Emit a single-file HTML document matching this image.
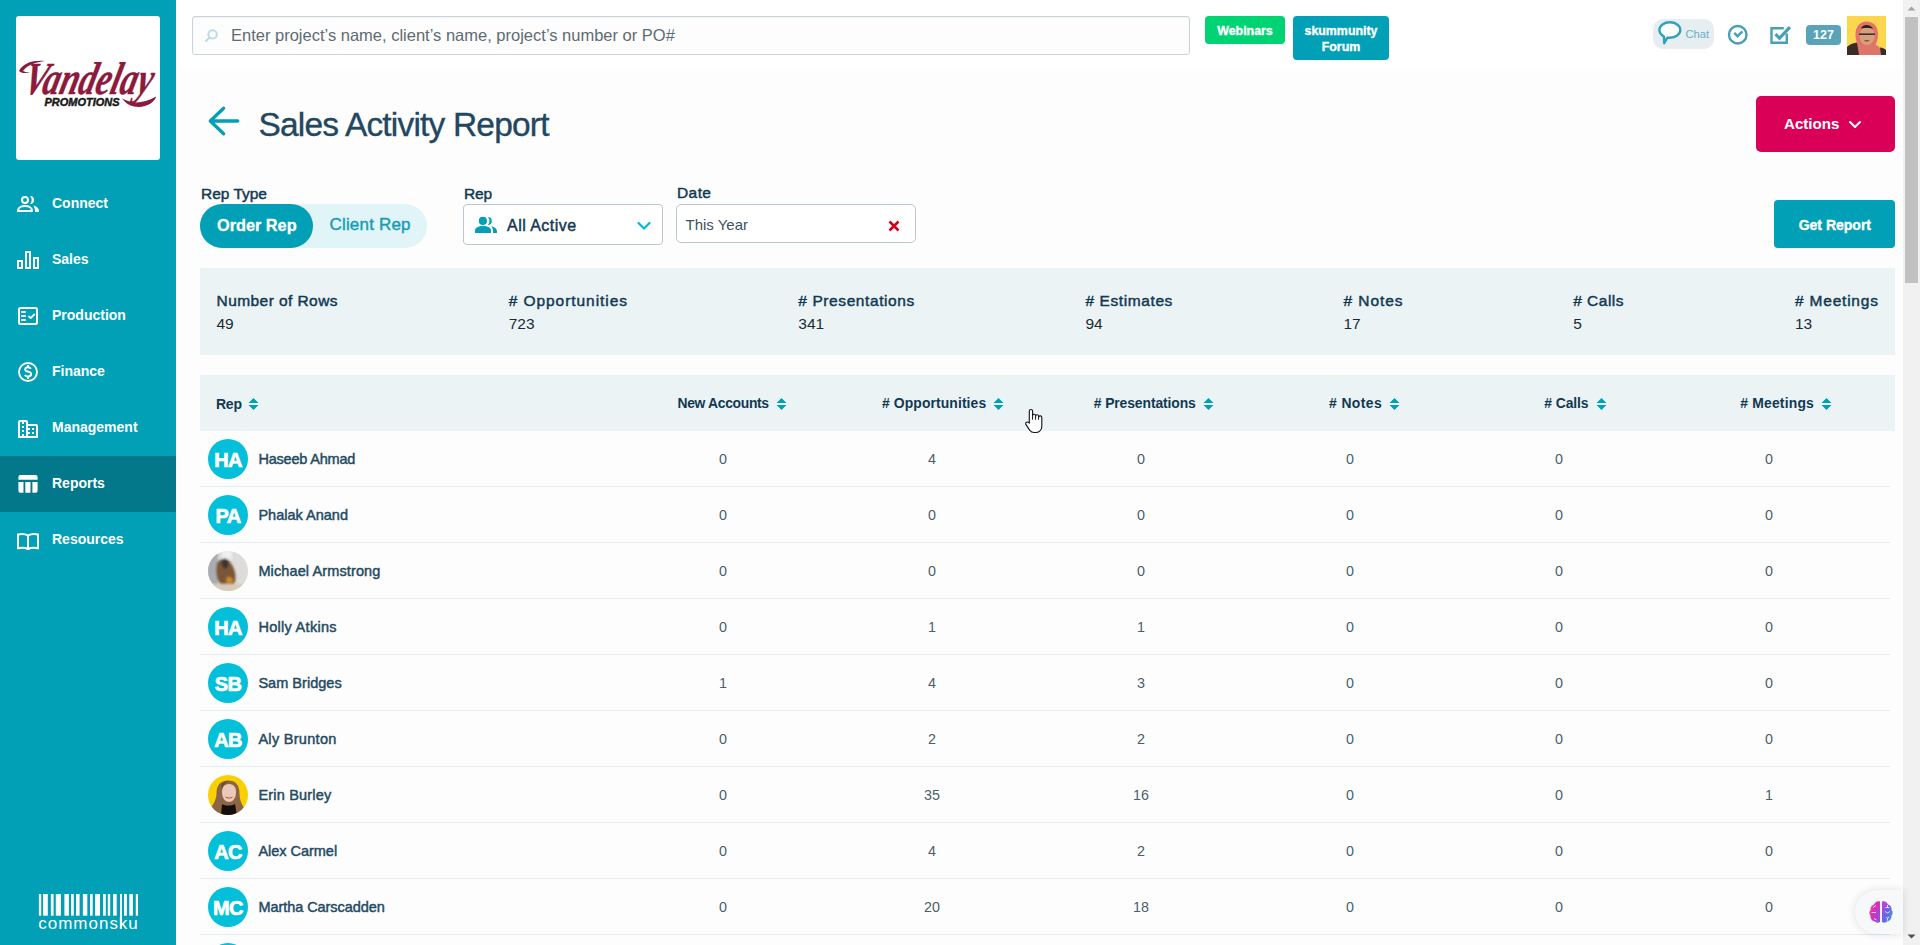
<!DOCTYPE html>
<html><head><meta charset="utf-8">
<style>
*{box-sizing:border-box;margin:0;padding:0}
html,body{width:1920px;height:945px;overflow:hidden;font-family:"Liberation Sans",sans-serif;background:#fdfdfd;color:#123952}
.abs{position:absolute}
.t{position:absolute;line-height:1;white-space:nowrap}
#side{position:absolute;left:0;top:0;width:176px;height:945px;background:#01a0b6}
#logo{position:absolute;left:16px;top:16px;width:144px;height:144px;background:#fff;border-radius:3px;overflow:hidden}
.nav{position:absolute;left:0;width:176px;height:56px;color:#fff;font-weight:bold;font-size:14px}
.nav span{position:absolute;left:52px;top:18px;line-height:18px}
#top{position:absolute;left:176px;top:0;width:1727px;height:69px;background:#fff}
#scroll{position:absolute;left:1903px;top:0;width:17px;height:945px;background:#f1f1f1}
</style></head><body>
<div id="side">
<div id="logo"><svg class="abs" style="left:0;top:0" width="144" height="144" viewBox="16 16 144 144">
<g transform="translate(22 93.5) skewX(-14)">
<text x="0" y="0" font-family="Liberation Serif" font-style="italic" font-weight="bold" font-size="46" fill="#8c1a3c" stroke="#8c1a3c" stroke-width="0.4" stroke-linejoin="round" textLength="128" lengthAdjust="spacingAndGlyphs">Vandelay</text>
</g>
<path d="M19 71 c4-8 14-11 26-10 c-9 1-18 4-22 10 c1 1 4 1 7 1 c-5 2-9 1-11-1z" fill="#8c1a3c"/>
<path d="M122 98.5 c9 5 20 6 34-2 c-1 6-11 12-22 10 c-5-1-9-4-12-8z" fill="#8c1a3c"/>
<text x="44.5" y="106" font-family="Liberation Sans" font-style="italic" font-weight="bold" font-size="11.5" fill="#1a1a1a" stroke="#1a1a1a" stroke-width="0.5" textLength="75" lengthAdjust="spacingAndGlyphs">PROMOTIONS</text>
</svg></div>
<div class="nav" style="top:176px"><svg class="abs" style="left:16px;top:18px" width="24" height="24" viewBox="16 194 24 24" fill="none" stroke="#fff" stroke-width="2"><circle cx="25" cy="200" r="3"/><path d="M18 211v-.3c0-2.9 3.1-4.6 7-4.6s7 1.7 7 4.6v.3z"/><path stroke="none" fill="#fff" d="M30 196a4 4 0 0 1 0 8a5.5 5.5 0 0 0 0-8z M33.3 205.4c3.3.9 5.7 2.8 5.7 5V212h-4v-.8c0-2.2-.6-4-1.7-5.8z"/></svg><span>Connect</span></div>
<div class="nav" style="top:232px"><svg class="abs" style="left:16px;top:16px" width="24" height="24" viewBox="16 248 24 24" fill="none" stroke="#fff" stroke-width="2"><rect x="18" y="261" width="4" height="7"/><rect x="26" y="252" width="4" height="16"/><rect x="34" y="258" width="4" height="10"/></svg><span>Sales</span></div>
<div class="nav" style="top:288px"><svg class="abs" style="left:16px;top:16px" width="24" height="24" viewBox="16 304 24 24" fill="none" stroke="#fff" stroke-width="2"><rect x="19" y="308" width="18" height="16" rx="1.5"/><path stroke-linecap="round" d="M22 312h3M22 316h3M22 320h3"/><path stroke-width="1.8" stroke-linecap="round" stroke-linejoin="round" d="M29 316.5l1.7 1.6 3.5-3.6"/></svg><span>Production</span></div>
<div class="nav" style="top:344px"><svg class="abs" style="left:16px;top:16px" width="24" height="24" viewBox="16 360 24 24" fill="none" stroke="#fff" stroke-width="2"><circle cx="28" cy="372" r="9" stroke-width="1.9"/><path stroke-width="1.9" d="M30.8 368.9c-.5-1-1.5-1.7-2.8-1.7-1.6 0-2.8.9-2.8 2.2 0 3 6 1.6 6 4.7 0 1.4-1.3 2.4-3.2 2.4-1.4 0-2.6-.7-3.1-1.7M28 365.1v2M28 376.9v2"/></svg><span>Finance</span></div>
<div class="nav" style="top:400px"><svg class="abs" style="left:16px;top:18px" width="24" height="24" viewBox="16 418 24 24" fill="none" stroke="#fff" stroke-width="2"><path fill="#fff" stroke="none" d="M18 422a2 2 0 0 1 2-2h6a2 2 0 0 1 2 2v2h8a2 2 0 0 1 2 2v12H18z"/><g fill="#01a0b6" stroke="none"><rect x="20" y="422" width="2" height="14"/><rect x="24" y="422" width="2" height="14"/><rect x="22" y="424" width="2" height="2"/><rect x="22" y="428" width="2" height="2"/><rect x="22" y="432" width="2" height="2"/><rect x="28" y="426" width="8" height="10"/></g><g fill="#fff" stroke="none"><rect x="28" y="428" width="2" height="2"/><rect x="28" y="432" width="2" height="2"/><rect x="32" y="428" width="2" height="2"/><rect x="32" y="432" width="2" height="2"/></g></svg><span>Management</span></div>
<div class="nav" style="top:456px;background:#02788a"><svg class="abs" style="left:16px;top:16px" width="24" height="24" viewBox="16 472 24 24" fill="none" stroke="#fff" stroke-width="2"><path fill="#fff" stroke="none" d="M18.4 477a2 2 0 0 1 2-2h15.2a2 2 0 0 1 2 2v2.8H18.4z M18.4 482h5.1v10.8h-3.1a2 2 0 0 1-2-2z M25.3 482h5.2v10.8h-5.2z M32.4 482h5.2v8.8a2 2 0 0 1-2 2h-3.2z"/></svg><span>Reports</span></div>
<div class="nav" style="top:512px"><svg class="abs" style="left:16px;top:18px" width="24" height="24" viewBox="16 530 24 24" fill="none" stroke="#fff" stroke-width="2"><path stroke-linejoin="round" d="M18 534.5c3-.9 6.5-.9 10 .8V549c-3.5-1.6-7-1.6-10-.6z M38 534.5c-3-.9-6.5-.9-10 .8V549c3.5-1.6 7-1.6 10-.6z"/></svg><span>Resources</span></div>
<svg class="abs" style="left:30px;top:885px" width="120" height="50" viewBox="30 885 120 50" fill="#fff"><rect x="38.9" y="894" width="2.30" height="21.7"/><rect x="43.1" y="894" width="4.70" height="21.7"/><rect x="50.9" y="894" width="2.70" height="21.7"/><rect x="55.8" y="894" width="5.10" height="21.7"/><rect x="64.4" y="894" width="4.50" height="21.7"/><rect x="71.1" y="894" width="2.70" height="21.7"/><rect x="76" y="894" width="3.60" height="21.7"/><rect x="82.9" y="894" width="4.40" height="21.7"/><rect x="90" y="894" width="2.70" height="21.7"/><rect x="95.1" y="894" width="4.90" height="21.7"/><rect x="103.1" y="894" width="2.70" height="21.7"/><rect x="107.8" y="894" width="2.40" height="21.7"/><rect x="113.1" y="894" width="3.60" height="21.7"/><rect x="120" y="894" width="2.00" height="34.7"/><rect x="124" y="894" width="2.90" height="21.7"/><rect x="129.3" y="894" width="3.60" height="21.7"/><rect x="135.8" y="894" width="2.20" height="21.7"/>
<text x="38.3" y="928.7" font-family="Liberation Sans" font-size="17" fill="#fff" textLength="99.5" lengthAdjust="spacing">commonsku</text></svg></div>
<div id="top"></div>
<div class="abs" style="left:192px;top:16px;width:998px;height:39px;border:1px solid #c9d3da;border-radius:3px;background:#fdfdfd;box-shadow:inset 0 1px 2px rgba(0,0,0,.05)"></div>
<svg class="abs" style="left:204px;top:28px" width="15" height="15" viewBox="0 0 15 15" fill="none" stroke="#b9dce5" stroke-width="2"><circle cx="8.6" cy="6.4" r="4.2"/><path d="M5.6 9.4L2 13" stroke-linecap="round"/></svg>
<div class="t" style="left:231px;top:27.13px;font-size:16.5px;font-weight:normal;color:#5f6b73;">Enter project&#8217;s name, client&#8217;s name, project&#8217;s number or PO#</div>
<div class="abs" style="left:1205px;top:16px;width:80px;height:28px;background:#00d374;border-radius:4px"></div>
<div class="t" style="left:1145.0px;width:200px;text-align:center;top:25.10px;font-size:12.4px;font-weight:bold;color:#fff;-webkit-text-stroke:0.35px #fff;">Webinars</div>
<div class="abs" style="left:1293px;top:16px;width:96px;height:44px;background:#01a0b6;border-radius:4px"></div>
<div class="t" style="left:1241.0px;width:200px;text-align:center;top:25.10px;font-size:12.4px;font-weight:bold;color:#fff;-webkit-text-stroke:0.35px #fff;">skummunity</div>
<div class="t" style="left:1241.0px;width:200px;text-align:center;top:40.70px;font-size:12.4px;font-weight:bold;color:#fff;-webkit-text-stroke:0.35px #fff;">Forum</div>
<div class="abs" style="left:1653px;top:19px;width:61px;height:30px;background:#e6eef1;border-radius:10px"></div>
<svg class="abs" style="left:1656px;top:19px" width="28" height="28" viewBox="0 0 28 28" fill="#fff" stroke="#2ea2ba" stroke-width="2.4" stroke-linejoin="round"><path d="M8 17.6C4.8 15.8 3.4 13.6 3.4 11c0-4.4 4.7-7.8 10.45-7.8s10.45 3.4 10.45 7.8-4.7 7.8-10.45 7.8c-.9 0-1.7-.1-2.5-.2L8.2 24.2z"/></svg>
<div class="t" style="left:1685.5px;top:28.72px;font-size:11.2px;font-weight:normal;color:#6cafc2;">Chat</div>
<svg class="abs" style="left:1726px;top:23px" width="24" height="24" viewBox="0 0 24 24" fill="none" stroke="#4a9fb8" stroke-width="2.4"><circle cx="11.75" cy="11.75" r="8.75"/><path d="M8.3 9.9l3.2 3.4 4.9-5" stroke-linecap="butt" stroke-linejoin="miter" stroke-width="2.5"/></svg>
<svg class="abs" style="left:1769px;top:24px" width="24" height="22" viewBox="0 0 24 22" fill="none" stroke="#4a9fb8" stroke-width="2.4"><path d="M17.8 9.5V18.7H2.5V4.2H14.8"/><path d="M6.5 10.2l4 4 10.5-11" stroke-width="3.2"/></svg>
<div class="abs" style="left:1806px;top:25px;width:35px;height:20px;background:#5aa3b8;border-radius:4px"></div>
<div class="t" style="left:1723.5px;width:200px;text-align:center;top:29.42px;font-size:12.5px;font-weight:bold;color:#fff;">127</div>
<svg class="abs" style="left:1847px;top:16px" width="39" height="39" viewBox="0 0 39 39">
<rect width="39" height="39" fill="#fdd64f"/>
<path d="M19.5 5.5c-7 0-11 5.5-11 13 0 4 .8 7 2.2 9.5C6 30 3.5 33.5 2.5 39H37c-1.5-5-4.5-8.5-8.5-10.5 1.7-3 2.5-6.5 2.5-10.5 0-7.5-4.5-12.5-11.5-12.5z" fill="#e07468"/>
<path d="M0 31c3-3 7-4 10-4.5L12 39H0z" fill="#3a2a2a"/>
<path d="M39 34c-1.5-1.5-4-2.5-6-2.5L34 39h5z" fill="#3a2a2a"/>
<path d="M12.5 19.5c0-5 3-8.5 7.5-8.5s7.5 3.5 7.5 8.5c0 5.5-3.2 9.5-7.5 9.5s-7.5-4-7.5-9.5z" fill="#d6a07a"/>
<path d="M12 18.2h16" stroke="#3d3030" stroke-width="1.6"/>
<path d="M15.5 11.5c1.5-2 6-2.5 8.5 0-2.5-.5-6-.5-8.5 0z" fill="#2a1e1e" stroke="#2a1e1e" stroke-width="1.5"/>
<path d="M17 24.5c1.6 1 4 1 5.5 0" stroke="#b06a60" stroke-width="1"/>
</svg><div id="scroll"><div class="abs" style="left:2px;top:17px;width:13px;height:266px;background:#c1c1c1"></div><svg class="abs" style="left:0;top:0" width="17" height="17"><path d="M4.5 10.5L8.5 6.5 12.5 10.5z" fill="#a3a3a3"/></svg><svg class="abs" style="left:0;top:928px" width="17" height="17"><path d="M4.5 6.5L8.5 10.5 12.5 6.5z" fill="#505050"/></svg></div>
<svg class="abs" style="left:200px;top:100px" width="48" height="42" viewBox="200 100 48 42" fill="none" stroke="#01a0b6" stroke-width="3.3" stroke-linecap="round" stroke-linejoin="round"><path d="M223.6 108.2L210.3 121l13.3 12.8M210.5 121h27.3"/></svg>
<div class="t" style="left:258.5px;top:108.04px;font-size:33.5px;font-weight:normal;color:#22475f;-webkit-text-stroke:0.35px #22475f;letter-spacing:-0.812px;">Sales Activity Report</div>
<div class="abs" style="left:1756px;top:96px;width:139px;height:56px;background:#db0057;border-radius:5px"></div>
<div class="t" style="left:1784px;top:116.31px;font-size:15.1px;font-weight:bold;color:#fff;">Actions</div>
<svg class="abs" style="left:1848px;top:119px" width="14" height="11" viewBox="0 0 14 11" fill="none" stroke="#fff" stroke-width="2" stroke-linecap="round" stroke-linejoin="round"><path d="M2 3l5 5 5-5"/></svg>
<div class="t" style="left:201.0px;top:185.88px;font-size:15.5px;font-weight:normal;color:#123952;letter-spacing:-0.018px;-webkit-text-stroke:0.45px #123952;">Rep Type</div>
<div class="abs" style="left:200px;top:204px;width:227px;height:44px;background:#e1f5f8;border-radius:22px"></div>
<div class="abs" style="left:200px;top:204px;width:113px;height:44px;background:#01a0b6;border-radius:22px"></div>
<div class="t" style="left:217px;top:217.00px;font-size:16.3px;font-weight:bold;color:#fff;-webkit-text-stroke:0.3px #fff;">Order Rep</div>
<div class="t" style="left:329.5px;top:216.41px;font-size:17px;font-weight:normal;color:#1a9db3;letter-spacing:0.181px;-webkit-text-stroke:0.45px #1a9db3;">Client Rep</div>
<div class="t" style="left:464.0px;top:185.88px;font-size:15.5px;font-weight:normal;color:#123952;letter-spacing:-0.188px;-webkit-text-stroke:0.45px #123952;">Rep</div>
<div class="abs" style="left:463px;top:204px;width:200px;height:41px;border:1px solid #bcc8d0;border-radius:4px;background:#fff"></div>
<svg class="abs" style="left:474px;top:216px" width="24" height="18" viewBox="0 0 24 18" fill="#01a0b6"><circle cx="8.9" cy="4.9" r="4.05"/><path d="M13.8 1a4 4 0 0 1 0 8a5.5 5.5 0 0 0 0-8z"/><path d="M1 17.1v-2.6c0-2.8 3.5-4.5 8-4.5s8 1.7 8 4.5v2.6z"/><path d="M17.4 10.3c3 .7 5.6 2.6 5.6 5v1.8h-4v-1.8c0-2-.6-3.7-1.6-5z"/></svg>
<div class="t" style="left:507.0px;top:217.75px;font-size:16px;font-weight:normal;color:#123952;letter-spacing:0.458px;-webkit-text-stroke:0.45px #123952;">All Active</div>
<svg class="abs" style="left:635px;top:218.5px" width="18" height="14" viewBox="0 0 18 14" fill="none" stroke="#00bcd6" stroke-width="2.2" stroke-linecap="round" stroke-linejoin="round"><path d="M3.5 4l5.5 5.5 5.5-5.5"/></svg>
<div class="t" style="left:677.0px;top:185.38px;font-size:15.5px;font-weight:normal;color:#123952;letter-spacing:0.417px;-webkit-text-stroke:0.45px #123952;">Date</div>
<div class="abs" style="left:676px;top:204px;width:240px;height:39px;border:1px solid #bcc8d0;border-radius:5px;background:#fff"></div>
<div class="t" style="left:685.5px;top:217.10px;font-size:15px;font-weight:normal;color:#3f5260;">This Year</div>
<svg class="abs" style="left:886px;top:218px" width="16" height="16" viewBox="0 0 16 16" fill="none" stroke="#d0021b" stroke-width="2.6"><path d="M3.5 3.5l9 9M12.5 3.5l-9 9"/></svg>
<div class="abs" style="left:1774px;top:200px;width:121px;height:48px;background:#01a0b6;border-radius:4px"></div>
<div class="t" style="left:1798.7px;top:217.65px;font-size:14px;font-weight:bold;color:#fff;-webkit-text-stroke:0.35px #fff;">Get Report</div>
<div class="abs" style="left:200px;top:268px;width:1695px;height:87px;background:#ebf3f5"></div>
<div class="t" style="left:216.5px;top:292.88px;font-size:15.5px;font-weight:normal;color:#123952;letter-spacing:0.433px;-webkit-text-stroke:0.45px #123952;">Number of Rows</div>
<div class="t" style="left:216.5px;top:316.48px;font-size:15.5px;font-weight:normal;color:#1b2b36;">49</div>
<div class="t" style="left:508.7px;top:292.88px;font-size:15.5px;font-weight:normal;color:#123952;letter-spacing:0.941px;-webkit-text-stroke:0.45px #123952;"># Opportunities</div>
<div class="t" style="left:508.7px;top:316.48px;font-size:15.5px;font-weight:normal;color:#1b2b36;">723</div>
<div class="t" style="left:798.3px;top:292.88px;font-size:15.5px;font-weight:normal;color:#123952;letter-spacing:0.589px;-webkit-text-stroke:0.45px #123952;"># Presentations</div>
<div class="t" style="left:798.3px;top:316.48px;font-size:15.5px;font-weight:normal;color:#1b2b36;">341</div>
<div class="t" style="left:1085.4px;top:292.88px;font-size:15.5px;font-weight:normal;color:#123952;letter-spacing:0.600px;-webkit-text-stroke:0.45px #123952;"># Estimates</div>
<div class="t" style="left:1085.4px;top:316.48px;font-size:15.5px;font-weight:normal;color:#1b2b36;">94</div>
<div class="t" style="left:1343.5px;top:292.88px;font-size:15.5px;font-weight:normal;color:#123952;letter-spacing:0.938px;-webkit-text-stroke:0.45px #123952;"># Notes</div>
<div class="t" style="left:1343.5px;top:316.48px;font-size:15.5px;font-weight:normal;color:#1b2b36;">17</div>
<div class="t" style="left:1573.2px;top:292.88px;font-size:15.5px;font-weight:normal;color:#123952;letter-spacing:0.487px;-webkit-text-stroke:0.45px #123952;"># Calls</div>
<div class="t" style="left:1573.2px;top:316.48px;font-size:15.5px;font-weight:normal;color:#1b2b36;">5</div>
<div class="t" style="left:1795.0px;top:292.88px;font-size:15.5px;font-weight:normal;color:#123952;letter-spacing:0.792px;-webkit-text-stroke:0.45px #123952;"># Meetings</div>
<div class="t" style="left:1795px;top:316.48px;font-size:15.5px;font-weight:normal;color:#1b2b36;">13</div>
<div class="abs" style="left:200px;top:375px;width:1695px;height:56px;background:#ebf3f5"></div>
<div class="t" style="left:216.0px;top:397.15px;font-size:14px;font-weight:bold;color:#123952;letter-spacing:-0.250px;">Rep</div>
<svg class="abs" style="left:248px;top:396.5px" width="11" height="14" viewBox="0 0 11 14" fill="#01a0b6"><path d="M5.5 1L10.5 6H.5z M5.5 13L.5 8h10z"/></svg>
<div class="t" style="left:677.5px;top:397.23px;font-size:13.9px;font-weight:bold;color:#123952;letter-spacing:-0.330px;">New Accounts</div>
<svg class="abs" style="left:775.5px;top:396.5px" width="11" height="14" viewBox="0 0 11 14" fill="#01a0b6"><path d="M5.5 1L10.5 6H.5z M5.5 13L.5 8h10z"/></svg>
<div class="t" style="left:882.0px;top:397.23px;font-size:13.9px;font-weight:bold;color:#123952;letter-spacing:0.107px;"># Opportunities</div>
<svg class="abs" style="left:992.5px;top:396.5px" width="11" height="14" viewBox="0 0 11 14" fill="#01a0b6"><path d="M5.5 1L10.5 6H.5z M5.5 13L.5 8h10z"/></svg>
<div class="t" style="left:1093.75px;top:397.23px;font-size:13.9px;font-weight:bold;color:#123952;letter-spacing:-0.098px;"># Presentations</div>
<svg class="abs" style="left:1202.5px;top:396.5px" width="11" height="14" viewBox="0 0 11 14" fill="#01a0b6"><path d="M5.5 1L10.5 6H.5z M5.5 13L.5 8h10z"/></svg>
<div class="t" style="left:1329.0px;top:397.23px;font-size:13.9px;font-weight:bold;color:#123952;letter-spacing:0.413px;"># Notes</div>
<svg class="abs" style="left:1388.5px;top:396.5px" width="11" height="14" viewBox="0 0 11 14" fill="#01a0b6"><path d="M5.5 1L10.5 6H.5z M5.5 13L.5 8h10z"/></svg>
<div class="t" style="left:1544.3px;top:397.23px;font-size:13.9px;font-weight:bold;color:#123952;letter-spacing:-0.092px;"># Calls</div>
<svg class="abs" style="left:1595.5px;top:396.5px" width="11" height="14" viewBox="0 0 11 14" fill="#01a0b6"><path d="M5.5 1L10.5 6H.5z M5.5 13L.5 8h10z"/></svg>
<div class="t" style="left:1740.3px;top:397.23px;font-size:13.9px;font-weight:bold;color:#123952;letter-spacing:0.194px;"># Meetings</div>
<svg class="abs" style="left:1820.5px;top:396.5px" width="11" height="14" viewBox="0 0 11 14" fill="#01a0b6"><path d="M5.5 1L10.5 6H.5z M5.5 13L.5 8h10z"/></svg>
<div class="abs" style="left:208px;top:439px;width:40px;height:40px;border-radius:50%;background:#02c0da"></div>
<div class="t" style="left:208.0px;width:40px;text-align:center;top:450.07px;font-size:20px;font-weight:bold;color:#fff;-webkit-text-stroke:0.7px #fff;letter-spacing:-0.6px;">HA</div>
<div class="t" style="left:258.4px;top:452.42px;font-size:14.5px;font-weight:normal;color:#234a63;letter-spacing:-0.193px;-webkit-text-stroke:0.45px #234a63;">Haseeb Ahmad</div>
<div class="t" style="left:623.0px;width:200px;text-align:center;top:452.09px;font-size:14.3px;font-weight:normal;color:#4b5f6c;">0</div>
<div class="t" style="left:832.0px;width:200px;text-align:center;top:452.09px;font-size:14.3px;font-weight:normal;color:#4b5f6c;">4</div>
<div class="t" style="left:1041.0px;width:200px;text-align:center;top:452.09px;font-size:14.3px;font-weight:normal;color:#4b5f6c;">0</div>
<div class="t" style="left:1250.0px;width:200px;text-align:center;top:452.09px;font-size:14.3px;font-weight:normal;color:#4b5f6c;">0</div>
<div class="t" style="left:1459.0px;width:200px;text-align:center;top:452.09px;font-size:14.3px;font-weight:normal;color:#4b5f6c;">0</div>
<div class="t" style="left:1669.0px;width:200px;text-align:center;top:452.09px;font-size:14.3px;font-weight:normal;color:#4b5f6c;">0</div>
<div class="abs" style="left:200px;top:486px;width:1690px;height:1px;background:#e3ecef"></div>
<div class="abs" style="left:208px;top:495px;width:40px;height:40px;border-radius:50%;background:#02c0da"></div>
<div class="t" style="left:208.0px;width:40px;text-align:center;top:506.07px;font-size:20px;font-weight:bold;color:#fff;-webkit-text-stroke:0.7px #fff;letter-spacing:-0.6px;">PA</div>
<div class="t" style="left:258.4px;top:508.42px;font-size:14.5px;font-weight:normal;color:#234a63;letter-spacing:0.011px;-webkit-text-stroke:0.45px #234a63;">Phalak Anand</div>
<div class="t" style="left:623.0px;width:200px;text-align:center;top:508.09px;font-size:14.3px;font-weight:normal;color:#4b5f6c;">0</div>
<div class="t" style="left:832.0px;width:200px;text-align:center;top:508.09px;font-size:14.3px;font-weight:normal;color:#4b5f6c;">0</div>
<div class="t" style="left:1041.0px;width:200px;text-align:center;top:508.09px;font-size:14.3px;font-weight:normal;color:#4b5f6c;">0</div>
<div class="t" style="left:1250.0px;width:200px;text-align:center;top:508.09px;font-size:14.3px;font-weight:normal;color:#4b5f6c;">0</div>
<div class="t" style="left:1459.0px;width:200px;text-align:center;top:508.09px;font-size:14.3px;font-weight:normal;color:#4b5f6c;">0</div>
<div class="t" style="left:1669.0px;width:200px;text-align:center;top:508.09px;font-size:14.3px;font-weight:normal;color:#4b5f6c;">0</div>
<div class="abs" style="left:200px;top:542px;width:1690px;height:1px;background:#e3ecef"></div>
<svg class="abs" style="left:208px;top:551px" width="40" height="40" viewBox="0 0 40 40">
<defs><clipPath id="c1"><circle cx="20" cy="20" r="20"/></clipPath><filter id="bl1"><feGaussianBlur stdDeviation="1.2"/></filter></defs>
<g clip-path="url(#c1)"><rect width="40" height="40" fill="#dedcda"/>
<g filter="url(#bl1)">
<rect x="-2" y="0" width="12" height="40" fill="#a9adb3"/>
<rect x="14" y="-2" width="10" height="10" fill="#eef0f2"/>
<path d="M9 12c3-5 10-5 13-1 4 5 7 13 5 20-2 5-8 6-13 3-5-3-7-12-5-22z" fill="#7a5634"/>
<path d="M14 9c2-2 5-2 6 1 1 4 0 7-3 8-3-2-4-5-3-9z" fill="#3a3330"/>
<path d="M19 26c3-1 6 1 6 5-2 2-5 2-7 0z" fill="#c98a2c"/>
<rect x="-2" y="33" width="44" height="9" fill="#d8ccb8"/>
</g></g></svg><div class="t" style="left:258.4px;top:564.42px;font-size:14.5px;font-weight:normal;color:#234a63;letter-spacing:0.117px;-webkit-text-stroke:0.45px #234a63;">Michael Armstrong</div>
<div class="t" style="left:623.0px;width:200px;text-align:center;top:564.09px;font-size:14.3px;font-weight:normal;color:#4b5f6c;">0</div>
<div class="t" style="left:832.0px;width:200px;text-align:center;top:564.09px;font-size:14.3px;font-weight:normal;color:#4b5f6c;">0</div>
<div class="t" style="left:1041.0px;width:200px;text-align:center;top:564.09px;font-size:14.3px;font-weight:normal;color:#4b5f6c;">0</div>
<div class="t" style="left:1250.0px;width:200px;text-align:center;top:564.09px;font-size:14.3px;font-weight:normal;color:#4b5f6c;">0</div>
<div class="t" style="left:1459.0px;width:200px;text-align:center;top:564.09px;font-size:14.3px;font-weight:normal;color:#4b5f6c;">0</div>
<div class="t" style="left:1669.0px;width:200px;text-align:center;top:564.09px;font-size:14.3px;font-weight:normal;color:#4b5f6c;">0</div>
<div class="abs" style="left:200px;top:598px;width:1690px;height:1px;background:#e3ecef"></div>
<div class="abs" style="left:208px;top:607px;width:40px;height:40px;border-radius:50%;background:#02c0da"></div>
<div class="t" style="left:208.0px;width:40px;text-align:center;top:618.07px;font-size:20px;font-weight:bold;color:#fff;-webkit-text-stroke:0.7px #fff;letter-spacing:-0.6px;">HA</div>
<div class="t" style="left:258.4px;top:620.42px;font-size:14.5px;font-weight:normal;color:#234a63;letter-spacing:0.295px;-webkit-text-stroke:0.45px #234a63;">Holly Atkins</div>
<div class="t" style="left:623.0px;width:200px;text-align:center;top:620.09px;font-size:14.3px;font-weight:normal;color:#4b5f6c;">0</div>
<div class="t" style="left:832.0px;width:200px;text-align:center;top:620.09px;font-size:14.3px;font-weight:normal;color:#4b5f6c;">1</div>
<div class="t" style="left:1041.0px;width:200px;text-align:center;top:620.09px;font-size:14.3px;font-weight:normal;color:#4b5f6c;">1</div>
<div class="t" style="left:1250.0px;width:200px;text-align:center;top:620.09px;font-size:14.3px;font-weight:normal;color:#4b5f6c;">0</div>
<div class="t" style="left:1459.0px;width:200px;text-align:center;top:620.09px;font-size:14.3px;font-weight:normal;color:#4b5f6c;">0</div>
<div class="t" style="left:1669.0px;width:200px;text-align:center;top:620.09px;font-size:14.3px;font-weight:normal;color:#4b5f6c;">0</div>
<div class="abs" style="left:200px;top:654px;width:1690px;height:1px;background:#e3ecef"></div>
<div class="abs" style="left:208px;top:663px;width:40px;height:40px;border-radius:50%;background:#02c0da"></div>
<div class="t" style="left:208.0px;width:40px;text-align:center;top:674.07px;font-size:20px;font-weight:bold;color:#fff;-webkit-text-stroke:0.7px #fff;letter-spacing:-0.6px;">SB</div>
<div class="t" style="left:258.4px;top:676.42px;font-size:14.5px;font-weight:normal;color:#234a63;letter-spacing:0.025px;-webkit-text-stroke:0.45px #234a63;">Sam Bridges</div>
<div class="t" style="left:623.0px;width:200px;text-align:center;top:676.09px;font-size:14.3px;font-weight:normal;color:#4b5f6c;">1</div>
<div class="t" style="left:832.0px;width:200px;text-align:center;top:676.09px;font-size:14.3px;font-weight:normal;color:#4b5f6c;">4</div>
<div class="t" style="left:1041.0px;width:200px;text-align:center;top:676.09px;font-size:14.3px;font-weight:normal;color:#4b5f6c;">3</div>
<div class="t" style="left:1250.0px;width:200px;text-align:center;top:676.09px;font-size:14.3px;font-weight:normal;color:#4b5f6c;">0</div>
<div class="t" style="left:1459.0px;width:200px;text-align:center;top:676.09px;font-size:14.3px;font-weight:normal;color:#4b5f6c;">0</div>
<div class="t" style="left:1669.0px;width:200px;text-align:center;top:676.09px;font-size:14.3px;font-weight:normal;color:#4b5f6c;">0</div>
<div class="abs" style="left:200px;top:710px;width:1690px;height:1px;background:#e3ecef"></div>
<div class="abs" style="left:208px;top:719px;width:40px;height:40px;border-radius:50%;background:#02c0da"></div>
<div class="t" style="left:208.0px;width:40px;text-align:center;top:730.07px;font-size:20px;font-weight:bold;color:#fff;-webkit-text-stroke:0.7px #fff;letter-spacing:-0.6px;">AB</div>
<div class="t" style="left:258.4px;top:732.42px;font-size:14.5px;font-weight:normal;color:#234a63;letter-spacing:0.300px;-webkit-text-stroke:0.45px #234a63;">Aly Brunton</div>
<div class="t" style="left:623.0px;width:200px;text-align:center;top:732.09px;font-size:14.3px;font-weight:normal;color:#4b5f6c;">0</div>
<div class="t" style="left:832.0px;width:200px;text-align:center;top:732.09px;font-size:14.3px;font-weight:normal;color:#4b5f6c;">2</div>
<div class="t" style="left:1041.0px;width:200px;text-align:center;top:732.09px;font-size:14.3px;font-weight:normal;color:#4b5f6c;">2</div>
<div class="t" style="left:1250.0px;width:200px;text-align:center;top:732.09px;font-size:14.3px;font-weight:normal;color:#4b5f6c;">0</div>
<div class="t" style="left:1459.0px;width:200px;text-align:center;top:732.09px;font-size:14.3px;font-weight:normal;color:#4b5f6c;">0</div>
<div class="t" style="left:1669.0px;width:200px;text-align:center;top:732.09px;font-size:14.3px;font-weight:normal;color:#4b5f6c;">0</div>
<div class="abs" style="left:200px;top:766px;width:1690px;height:1px;background:#e3ecef"></div>
<svg class="abs" style="left:208px;top:775px" width="40" height="40" viewBox="0 0 40 40">
<defs><clipPath id="c2"><circle cx="20" cy="20" r="20"/></clipPath><filter id="bl2"><feGaussianBlur stdDeviation=".5"/></filter></defs>
<g clip-path="url(#c2)"><rect width="40" height="40" fill="#fbd000"/>
<g filter="url(#bl2)">
<path d="M20 5.5c-7.5 0-11.5 5-11.5 12.5 0 6-2.5 10-5 14l-2 9h37l-3-9c-2.5-4-4-8-4-14 0-8-4-12.5-11.5-12.5z" fill="#8a6546"/>
<path d="M14 17c0-5 2.5-8 7-8s7 3 7 8c0 6-3 10-7 10s-7-4-7-10z" fill="#ecc8b6"/>
<path d="M13 10c2-3 5-4 8-4-3 1-6 4-7 8z" fill="#6e4e36"/>
<path d="M17.5 22c2 1.5 5 1.5 7 0" stroke="#a0604e" stroke-width="1" fill="none"/>
<path d="M14 29c3 2 9 2 13 0l2 12H13z" fill="#151010"/>
</g></g></svg><div class="t" style="left:258.4px;top:788.42px;font-size:14.5px;font-weight:normal;color:#234a63;letter-spacing:0.188px;-webkit-text-stroke:0.45px #234a63;">Erin Burley</div>
<div class="t" style="left:623.0px;width:200px;text-align:center;top:788.09px;font-size:14.3px;font-weight:normal;color:#4b5f6c;">0</div>
<div class="t" style="left:832.0px;width:200px;text-align:center;top:788.09px;font-size:14.3px;font-weight:normal;color:#4b5f6c;">35</div>
<div class="t" style="left:1041.0px;width:200px;text-align:center;top:788.09px;font-size:14.3px;font-weight:normal;color:#4b5f6c;">16</div>
<div class="t" style="left:1250.0px;width:200px;text-align:center;top:788.09px;font-size:14.3px;font-weight:normal;color:#4b5f6c;">0</div>
<div class="t" style="left:1459.0px;width:200px;text-align:center;top:788.09px;font-size:14.3px;font-weight:normal;color:#4b5f6c;">0</div>
<div class="t" style="left:1669.0px;width:200px;text-align:center;top:788.09px;font-size:14.3px;font-weight:normal;color:#4b5f6c;">1</div>
<div class="abs" style="left:200px;top:822px;width:1690px;height:1px;background:#e3ecef"></div>
<div class="abs" style="left:208px;top:831px;width:40px;height:40px;border-radius:50%;background:#02c0da"></div>
<div class="t" style="left:208.0px;width:40px;text-align:center;top:842.07px;font-size:20px;font-weight:bold;color:#fff;-webkit-text-stroke:0.7px #fff;letter-spacing:-0.6px;">AC</div>
<div class="t" style="left:258.4px;top:844.42px;font-size:14.5px;font-weight:normal;color:#234a63;letter-spacing:-0.025px;-webkit-text-stroke:0.45px #234a63;">Alex Carmel</div>
<div class="t" style="left:623.0px;width:200px;text-align:center;top:844.09px;font-size:14.3px;font-weight:normal;color:#4b5f6c;">0</div>
<div class="t" style="left:832.0px;width:200px;text-align:center;top:844.09px;font-size:14.3px;font-weight:normal;color:#4b5f6c;">4</div>
<div class="t" style="left:1041.0px;width:200px;text-align:center;top:844.09px;font-size:14.3px;font-weight:normal;color:#4b5f6c;">2</div>
<div class="t" style="left:1250.0px;width:200px;text-align:center;top:844.09px;font-size:14.3px;font-weight:normal;color:#4b5f6c;">0</div>
<div class="t" style="left:1459.0px;width:200px;text-align:center;top:844.09px;font-size:14.3px;font-weight:normal;color:#4b5f6c;">0</div>
<div class="t" style="left:1669.0px;width:200px;text-align:center;top:844.09px;font-size:14.3px;font-weight:normal;color:#4b5f6c;">0</div>
<div class="abs" style="left:200px;top:878px;width:1690px;height:1px;background:#e3ecef"></div>
<div class="abs" style="left:208px;top:887px;width:40px;height:40px;border-radius:50%;background:#02c0da"></div>
<div class="t" style="left:208.0px;width:40px;text-align:center;top:898.07px;font-size:20px;font-weight:bold;color:#fff;-webkit-text-stroke:0.7px #fff;letter-spacing:-0.6px;">MC</div>
<div class="t" style="left:258.4px;top:900.42px;font-size:14.5px;font-weight:normal;color:#234a63;letter-spacing:-0.055px;-webkit-text-stroke:0.45px #234a63;">Martha Carscadden</div>
<div class="t" style="left:623.0px;width:200px;text-align:center;top:900.09px;font-size:14.3px;font-weight:normal;color:#4b5f6c;">0</div>
<div class="t" style="left:832.0px;width:200px;text-align:center;top:900.09px;font-size:14.3px;font-weight:normal;color:#4b5f6c;">20</div>
<div class="t" style="left:1041.0px;width:200px;text-align:center;top:900.09px;font-size:14.3px;font-weight:normal;color:#4b5f6c;">18</div>
<div class="t" style="left:1250.0px;width:200px;text-align:center;top:900.09px;font-size:14.3px;font-weight:normal;color:#4b5f6c;">0</div>
<div class="t" style="left:1459.0px;width:200px;text-align:center;top:900.09px;font-size:14.3px;font-weight:normal;color:#4b5f6c;">0</div>
<div class="t" style="left:1669.0px;width:200px;text-align:center;top:900.09px;font-size:14.3px;font-weight:normal;color:#4b5f6c;">0</div>
<div class="abs" style="left:200px;top:934px;width:1690px;height:1px;background:#e3ecef"></div>
<div class="abs" style="left:208px;top:943px;width:40px;height:40px;border-radius:50%;background:#02c0da"></div>
<div class="t" style="left:208.0px;width:40px;text-align:center;top:954.07px;font-size:20px;font-weight:bold;color:#fff;-webkit-text-stroke:0.7px #fff;letter-spacing:-0.6px;">JD</div>
<div class="abs" style="left:1855px;top:890px;width:48px;height:44px;border-radius:22px 0 0 22px;background:#f7f8fa;box-shadow:0 0 8px rgba(0,0,0,.12)"></div>
<svg class="abs" style="left:1868px;top:900px" width="26" height="24" viewBox="0 0 26 24">
<defs><linearGradient id="bg1" x1="0" y1="0" x2="1" y2="1"><stop offset="0" stop-color="#f7a42a"/><stop offset=".35" stop-color="#e829b8"/><stop offset="1" stop-color="#8a4fe6"/></linearGradient>
<linearGradient id="bg2" x1="0" y1="0" x2="1" y2="1"><stop offset="0" stop-color="#d83ad0"/><stop offset=".5" stop-color="#6b63ea"/><stop offset="1" stop-color="#39a6e0"/></linearGradient></defs>
<path d="M12 1.5 c-3 -1 -5 1 -6 3 c-2.5 .5-4 3-3.5 5.5 c-1.5 1.5-1.5 4 0 5.5 c-.3 3 1.5 5.5 4.5 6 c1.5 1.5 3.5 1.5 5 .5z" fill="url(#bg1)"/>
<path d="M14 1.5 c3 -1 5 1 6 3 c2.5 .5 4 3 3.5 5.5 c1.5 1.5 1.5 4 0 5.5 c.3 3-1.5 5.5-4.5 6 c-1.5 1.5-3.5 1.5-5 .5z" fill="url(#bg2)"/>
<path d="M5 7.5l3-2 M3.5 12.5h4.5 M6 18.5l2.5 1.5 M17.5 7.5h4 M19.5 5v2.5 M17 11.5l2.5 1.5 2.5-1.5 M18.5 17l1 1.5 1.5-1.5 M19.5 18.5v2" stroke="#fff" stroke-width=".9" fill="none" opacity=".85"/>
</svg><svg class="abs" style="left:1020px;top:405px" width="28" height="32" viewBox="1020 405 28 32">
<path d="M1029.3 423.2V411.1a1.65 1.65 0 0 1 3.3 0V415.6a1.5 1.5 0 0 1 3 .3V416.2a1.5 1.5 0 0 1 3 .2V417.3a1.6 1.6 0 0 1 3.2 .4V426.5c0 3.5-2.8 6-6.3 6h-1.3c-2 0-3.5-1-4.5-2.4l-3.7-5.5c-.6-.9-.3-2 .6-2.4.9-.4 1.7-.1 2.2.5z" fill="#fff" stroke="#111" stroke-width="1.1" stroke-linejoin="round"/>
<path d="M1032.6 415.5V419.7M1035.6 416.2V419.7M1038.6 417.3V419.7" stroke="#111" stroke-width="1"/>
</svg></body></html>
